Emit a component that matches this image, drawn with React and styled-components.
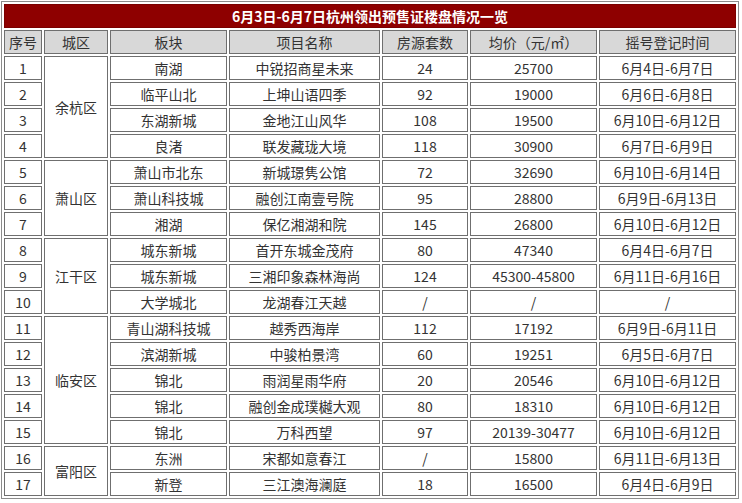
import styled, { createGlobalStyle } from "styled-components";

const GlobalStyle = createGlobalStyle`
  body {
    margin: 0;
    background: #fff;
    font-family: "Noto Sans CJK SC", "Noto Sans", sans-serif;
  }
`;

const widths = [38, 64, 117, 151, 86, 127, 137];

const heads = ["序号", "城区", "板块", "项目名称", "房源套数", "均价（元/㎡）", "摇号登记时间"];

const groups = [
  {
    area: "余杭区",
    rows: [
      ["南湖", "中锐招商星未来", "24", "25700", "6月4日-6月7日"],
      ["临平山北", "上坤山语四季", "92", "19000", "6月6日-6月8日"],
      ["东湖新城", "金地江山风华", "108", "19500", "6月10日-6月12日"],
      ["良渚", "联发藏珑大境", "118", "30900", "6月7日-6月9日"],
    ],
  },
  {
    area: "萧山区",
    rows: [
      ["萧山市北东", "新城璟隽公馆", "72", "32690", "6月10日-6月14日"],
      ["萧山科技城", "融创江南壹号院", "95", "28800", "6月9日-6月13日"],
      ["湘湖", "保亿湘湖和院", "145", "26800", "6月10日-6月12日"],
    ],
  },
  {
    area: "江干区",
    rows: [
      ["城东新城", "首开东城金茂府", "80", "47340", "6月4日-6月7日"],
      ["城东新城", "三湘印象森林海尚", "124", "45300-45800", "6月11日-6月16日"],
      ["大学城北", "龙湖春江天越", "/", "/", "/"],
    ],
  },
  {
    area: "临安区",
    rows: [
      ["青山湖科技城", "越秀西海岸", "112", "17192", "6月9日-6月11日"],
      ["滨湖新城", "中骏柏景湾", "60", "19251", "6月5日-6月7日"],
      ["锦北", "雨润星雨华府", "20", "20546", "6月10日-6月12日"],
      ["锦北", "融创金成璞樾大观", "80", "18310", "6月10日-6月12日"],
      ["锦北", "万科西望", "97", "20139-30477", "6月10日-6月12日"],
    ],
  },
  {
    area: "富阳区",
    rows: [
      ["东洲", "宋都如意春江", "/", "15800", "6月11日-6月13日"],
      ["新登", "三江澳海澜庭", "18", "16500", "6月4日-6月9日"],
    ],
  },
];

const Table = styled.table`
  margin: 1px 0 0 1px;
  border: 1px solid #8c8c8c;
  border-collapse: separate;
  border-spacing: 2px;
  table-layout: fixed;
  font-size: 14px;
  color: #333;
`;

const TitleCell = styled.td`
  height: 24px;
  box-sizing: border-box;
  padding: 0;
  background: #8e0000;
  color: #fff;
  font-weight: bold;
  font-size: 14px;
  text-align: center;
  border: 1px solid #7a0000;
`;

const Cell = styled.td`
  height: 24px;
  box-sizing: border-box;
  padding: 0;
  text-align: center;
  vertical-align: middle;
  white-space: nowrap;
  line-height: 20px;
  border: 1px solid #6f6f6f;
  background: ${(p) => (p.$head ? "#d8d8d8" : "#fff")};
`;

export default function App() {
  let n = 0;
  return (
    <>
      <GlobalStyle />
      <Table>
        <colgroup>
          {widths.map((w, i) => (
            <col key={i} style={{ width: w }} />
          ))}
        </colgroup>
        <tbody>
          <tr>
            <TitleCell colSpan={7}>6月3日-6月7日杭州领出预售证楼盘情况一览</TitleCell>
          </tr>
          <tr>
            {heads.map((h) => (
              <Cell key={h} $head>
                {h}
              </Cell>
            ))}
          </tr>
          {groups.map((g) =>
            g.rows.map((r, i) => {
              n += 1;
              return (
                <tr key={n}>
                  <Cell>{n}</Cell>
                  {i === 0 && <Cell rowSpan={g.rows.length}>{g.area}</Cell>}
                  {r.map((v, j) => (
                    <Cell key={j}>{v}</Cell>
                  ))}
                </tr>
              );
            })
          )}
        </tbody>
      </Table>
    </>
  );
}
